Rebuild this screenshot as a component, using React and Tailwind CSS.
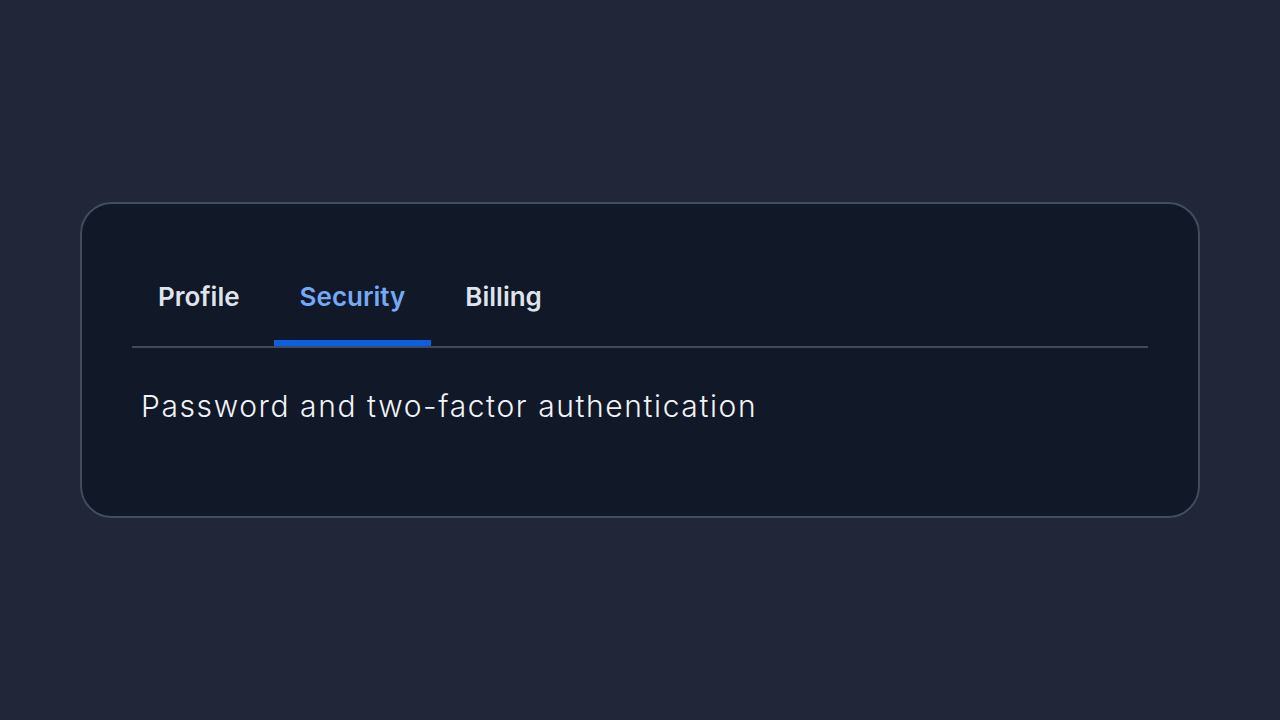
import { useState } from 'react';

const tabs = [
  { id: 'profile', label: 'Profile', body: 'Name, email and avatar' },
  { id: 'security', label: 'Security', body: 'Password and two-factor authentication' },
  { id: 'billing', label: 'Billing', body: 'Plan, invoices and payment methods' },
];

export default function App() {
  const [active, setActive] = useState('security');
  const current = tabs.find((t) => t.id === active);

  return (
    <div
      className="min-h-screen w-full bg-[#212738] flex items-center justify-center px-20"
      style={{ fontFamily: 'Inter, "Noto Sans", sans-serif' }}
    >
      <div className="w-full h-[316px] rounded-[32px] border-2 border-[#414c5f] bg-[#111827] px-[50px] pt-[50px]">
        {/* Tab list */}
        <div className="flex gap-2 border-b-2 border-[#3f4a5c]">
          {tabs.map((tab) => {
            const isActive = tab.id === active;
            return (
              <button
                key={tab.id}
                onClick={() => setActive(tab.id)}
                className={`relative px-[26px] pt-[28px] pb-[34px] text-[26px] font-semibold leading-[30px] ${
                  isActive ? 'text-[#75a9f7]' : 'text-[#dfe4ec]'
                }`}
              >
                {tab.label}
                {isActive && (
                  <span className="absolute left-0 right-0 bottom-0 h-[6px] bg-[#0b5fe0]" />
                )}
              </button>
            );
          })}
        </div>

        {/* Panel */}
        <div className="pt-[40px] pl-[9px]">
          <p className="text-[30px] font-light leading-[36px] tracking-[0.053em] text-[#f1f3f7]">{current.body}</p>
        </div>
      </div>
    </div>
  );
}
